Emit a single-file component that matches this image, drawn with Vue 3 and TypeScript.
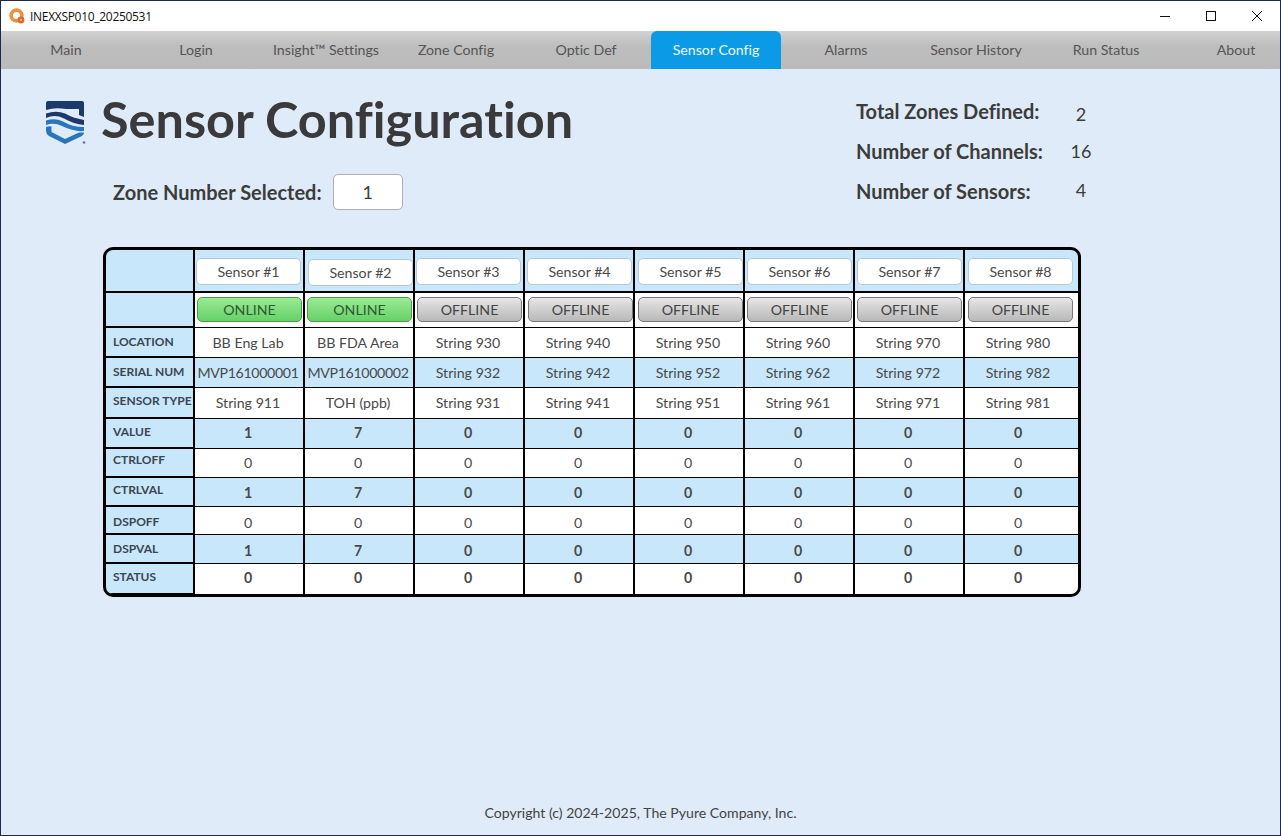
<script setup lang="ts">
const tabs = ['Main', 'Login', 'Insight™ Settings', 'Zone Config', 'Optic Def', 'Sensor Config', 'Alarms', 'Sensor History', 'Run Status', 'About']

const stats = [
  { label: 'Total Zones Defined:', value: 2, shift: 2 },
  { label: 'Number of Channels:', value: 16, shift: -1 },
  { label: 'Number of Sensors:', value: 4, shift: -2 },
]

// the buttons do not sit at the same spot in every column
const nameOffsets = [1, 3, 1, 2, 3, 2, 2, 3]
const stateOffsets = [2, 2, 2, 3, 3, 2, 2, 3]

const sensors = [
  { name: 'Sensor #1', online: true, drop: 1 },
  { name: 'Sensor #2', online: true, drop: 3 },
  { name: 'Sensor #3', online: false, drop: 1 },
  { name: 'Sensor #4', online: false, drop: 1 },
  { name: 'Sensor #5', online: false, drop: 1 },
  { name: 'Sensor #6', online: false, drop: 1 },
  { name: 'Sensor #7', online: false, drop: 1 },
  { name: 'Sensor #8', online: false, drop: 1 },
]

// textUp / labelUp: how far the text sits off the middle of its row
const rows = [
  { label: 'LOCATION', shade: false, bold: false, textUp: 0, labelUp: 1, cells: ['BB Eng Lab', 'BB FDA Area', 'String 930', 'String 940', 'String 950', 'String 960', 'String 970', 'String 980'] },
  { label: 'SERIAL NUM', shade: true, bold: false, textUp: 0, labelUp: 1, cells: ['MVP161000001', 'MVP161000002', 'String 932', 'String 942', 'String 952', 'String 962', 'String 972', 'String 982'] },
  { label: 'SENSOR TYPE', shade: false, bold: false, textUp: 1, labelUp: 2, cells: ['String 911', 'TOH (ppb)', 'String 931', 'String 941', 'String 951', 'String 961', 'String 971', 'String 981'] },
  { label: 'VALUE', shade: true, bold: true, textUp: 1, labelUp: 2, cells: ['1', '7', '0', '0', '0', '0', '0', '0'] },
  { label: 'CTRLOFF', shade: false, bold: false, textUp: 1, labelUp: 3, cells: ['0', '0', '0', '0', '0', '0', '0', '0'] },
  { label: 'CTRLVAL', shade: true, bold: true, textUp: 0, labelUp: 2, cells: ['1', '7', '0', '0', '0', '0', '0', '0'] },
  { label: 'DSPOFF', shade: false, bold: false, textUp: -2, labelUp: -1, cells: ['0', '0', '0', '0', '0', '0', '0', '0'] },
  { label: 'DSPVAL', shade: true, bold: true, textUp: -1, labelUp: 0, cells: ['1', '7', '0', '0', '0', '0', '0', '0'] },
  { label: 'STATUS', shade: false, bold: true, textUp: 2, labelUp: 2, cells: ['0', '0', '0', '0', '0', '0', '0', '0'] },
]

function nudge(up: number) {
  return up >= 0 ? { paddingBottom: up * 2 + 'px' } : { paddingTop: -up * 2 + 'px' }
}
</script>

<template>
  <div class="window">
    <header class="titlebar">
      <svg class="app-icon" viewBox="0 0 16 16" width="16" height="16">
        <circle cx="7.5" cy="7.5" r="5.4" fill="none" stroke="#ef8f3a" stroke-width="3.6" />
        <circle cx="12" cy="12" r="3.4" fill="#e0682a" />
        <circle cx="12" cy="12" r="1" fill="#f8d9c0" />
      </svg>
      <span class="app-name">INEXXSP010_20250531</span>
      <div class="win-controls">
        <svg viewBox="0 0 12 12" width="12" height="12"><path d="M1 6.500h10" stroke="#111" fill="none" /></svg>
        <svg viewBox="0 0 12 12" width="12" height="12"><rect x="1.500" y="1.500" width="9" height="9" stroke="#111" fill="none" /></svg>
        <svg viewBox="0 0 12 12" width="12" height="12"><path d="M1 1l10 10M11 1L1 11" stroke="#111" fill="none" /></svg>
      </div>
    </header>

    <nav class="tabs">
      <div v-for="tab in tabs" :key="tab" class="tab" :class="{ active: tab === 'Sensor Config' }">{{ tab }}</div>
    </nav>

    <main class="page">
      <section class="top">
        <div class="heading">
          <div class="title-row">
            <svg class="logo" viewBox="0 0 40 44" width="40" height="44">
              <path d="M0 9V2Q0 0 2 0H36Q38 0 38 2V16L33 14V8H20Q9 6 0 9Z" fill="#1b3a6b" />
              <path d="M0 12.500Q10 9 19 12.500Q27 17 38 19V24Q28 23 18 17.500Q9 13 0 17Z" fill="#1b3a6b" />
              <path d="M0 19.500Q9 16.500 17 20.500Q26 26 38 26V30Q28 31 16 25Q8 21 0 24Z" fill="#2a76bb" />
              <path d="M0 26Q3 25 5.500 25.500V31L19 38L33 31.500L38 31.500V32Q38 33 36 35L19 43L3 35Q0 33 0 30Z" fill="#2a76bb" />
              <circle cx="38" cy="41.500" r="1.300" fill="#4d7fae" />
            </svg>
            <h1>Sensor Configuration</h1>
          </div>
          <div class="zone-row">
            <label>Zone Number Selected:</label>
            <div class="zone-box">1</div>
          </div>
        </div>
        <dl class="stats">
          <div v-for="stat in stats" :key="stat.label" class="stat">
            <dt>{{ stat.label }}</dt>
            <dd :style="{ marginTop: stat.shift + 'px' }">{{ stat.value }}</dd>
          </div>
        </dl>
      </section>

      <section class="table">
        <div class="label head-line"></div>
        <div v-for="(sensor, i) in sensors" :key="sensor.name" class="cell head shade head-line">
          <div class="name-btn" :style="{ marginLeft: nameOffsets[i] + 'px', marginTop: sensor.drop + 'px' }">{{ sensor.name }}</div>
        </div>

        <div class="label"></div>
        <div v-for="(sensor, i) in sensors" :key="sensor.name + 'state'" class="cell head state-cell">
          <div class="state-btn" :class="{ online: sensor.online }" :style="{ marginLeft: stateOffsets[i] + 'px' }">
            {{ sensor.online ? 'ONLINE' : 'OFFLINE' }}
          </div>
        </div>

        <template v-for="row in rows" :key="row.label">
          <div class="label" :style="nudge(row.labelUp)">{{ row.label }}</div>
          <div
            v-for="(cell, i) in row.cells"
            :key="i"
            class="cell"
            :class="{ shade: row.shade, bold: row.bold, tight: cell.startsWith('MVP') }"
            :style="nudge(row.textUp)"
          >{{ cell }}</div>
        </template>
      </section>

      <footer class="copyright">Copyright (c) 2024-2025, The Pyure Company, Inc.</footer>
    </main>
  </div>
</template>

<style>
html,
body {
  margin: 0;
  background: #dfebf8;
}
</style>

<style scoped>
.window {
  width: 1281px;
  height: 836px;
  box-sizing: border-box;
  border: 1px solid #1d2a4d;
  display: flex;
  flex-direction: column;
  font-family: Lato, "Liberation Sans", sans-serif;
  font-variant-ligatures: none;
  color: #3c3c3c;
  overflow: hidden;
}

.titlebar {
  height: 30px;
  flex: none;
  background: #fff;
  display: flex;
  align-items: center;
  padding-left: 8px;
  color: #111;
}

.app-icon {
  margin-right: 5px;
}

.app-name {
  font-family: "Open Sans", "Liberation Sans", sans-serif;
  font-size: 12px;
  letter-spacing: -0.3px;
}

.win-controls {
  margin-left: auto;
  display: flex;
  gap: 34px;
  padding-right: 17px;
}

.tabs {
  height: 38px;
  flex: none;
  display: flex;
  background: linear-gradient(#d2d2d2, #bdbdbd 40%, #bbb);
}

.tab {
  width: 130px;
  flex: none;
  display: flex;
  align-items: center;
  justify-content: center;
  font-size: 14.2px;
  color: #555;
  padding-bottom: 2px;
  box-sizing: border-box;
}

.tab.active {
  background: #0a9ae6;
  color: #f2f8fd;
  border-radius: 6px 6px 0 0;
}

.page {
  flex: 1;
  background: #dfebf8;
  display: flex;
  flex-direction: column;
}

.top {
  display: flex;
  justify-content: space-between;
  height: 178px;
  flex: none;
}

.heading {
  padding: 18px 0 0 45px;
}

.title-row {
  display: flex;
  align-items: flex-start;
  gap: 15px;
}

.logo {
  margin-top: 14px;
}

h1 {
  margin: 0;
  font-size: 50.4px;
  line-height: 64px;
  font-weight: 700;
  color: #3a3a3c;
}

.zone-row {
  display: flex;
  align-items: center;
  gap: 11px;
  margin: 23px 0 0 67px;
}

.zone-row label {
  font-size: 20px;
  font-weight: 700;
}

.zone-box {
  width: 68px;
  height: 34px;
  background: #fff;
  border: 1px solid #a9b1b8;
  border-radius: 5px;
  display: flex;
  align-items: center;
  justify-content: center;
  font-size: 18px;
}

.stats {
  margin: 30px 184px 0 0;
  width: 240px;
}

.stat {
  display: flex;
  height: 40px;
  align-items: flex-start;
}

.stat dt {
  font-size: 20px;
  font-weight: 700;
  width: 210px;
}

.stat dd {
  margin: 0;
  font-size: 18px;
  width: 30px;
  text-align: center;
  padding-top: 2px;
}

.table {
  margin-left: 102px;
  width: 978px;
  box-sizing: border-box;
  border: 3px solid #000;
  border-radius: 10px;
  background: #000;
  overflow: hidden;
  display: grid;
  grid-template-columns: 87px repeat(7, 108px) 113px;
  grid-template-rows: 42px 34px 29px 29px 30px 29px 28px 28px 27px 28px 30px;
  column-gap: 2px;
  row-gap: 1px;
  flex: none;
}

.label {
  background: #c8e7fb;
  font-size: 12px;
  font-weight: 700;
  color: #3c4650;
  display: flex;
  align-items: center;
  padding-left: 7px;
  border-bottom: 1px solid #000;
  white-space: nowrap;
  box-sizing: border-box;
}

.cell {
  background: #fff;
  font-size: 14.2px;
  display: flex;
  align-items: center;
  justify-content: center;
  white-space: nowrap;
  color: #4a4a4a;
  padding-right: 2px;
}

.cell:nth-child(9n) {
  padding-right: 7px;
}

.cell.shade {
  background: #c8e7fb;
}

.cell.bold {
  font-weight: 700;
}

.cell.tight {
  letter-spacing: -0.35px;
}

.cell.head {
  justify-content: flex-start;
  padding-right: 0;
}

.cell.state-cell {
  padding-bottom: 2px;
}

.head-line {
  border-bottom: 1px solid #000;
}

.name-btn {
  width: 105px;
  height: 27px;
  box-sizing: border-box;
  background: #fff;
  border: 1px solid #b6c9d6;
  border-radius: 5px;
  display: flex;
  align-items: center;
  justify-content: center;
  font-size: 14.2px;
}

.state-btn {
  width: 105px;
  height: 25px;
  box-sizing: border-box;
  border: 1px solid #777;
  border-radius: 5px;
  background: linear-gradient(#e6e6e6, #b8b8b8);
  display: flex;
  align-items: center;
  justify-content: center;
  font-size: 14.2px;
  color: #444;
}

.state-btn.online {
  border-color: #4a9a4a;
  background: linear-gradient(#9aea94, #66d168);
  color: #2f5a34;
}

.copyright {
  margin-top: auto;
  margin-bottom: 14px;
  text-align: center;
  font-size: 14.1px;
  color: #444;
}
</style>
